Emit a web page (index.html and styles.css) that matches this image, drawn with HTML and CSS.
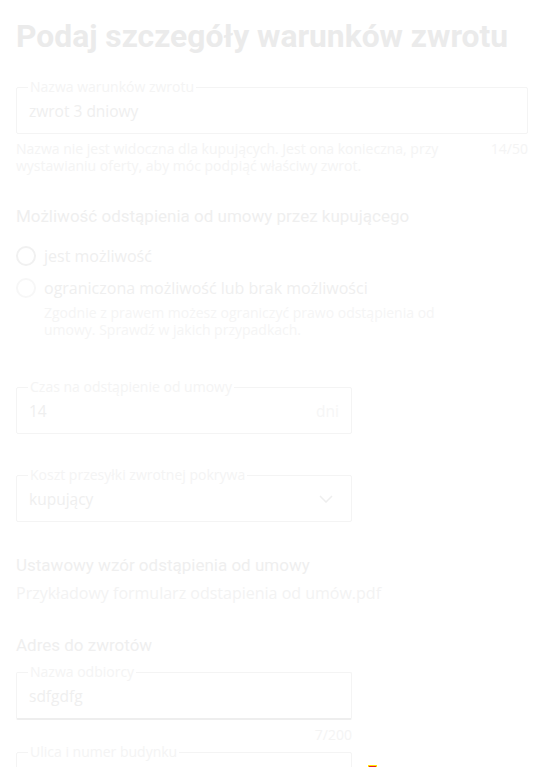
FILE: index.html
```html
<!DOCTYPE html>
<html lang="pl">
<head>
<meta charset="utf-8">
<link rel="stylesheet" href="styles.css">
</head>
<body>
<main class="page">
  <h1 class="title">Podaj szczegóły warunków zwrotu</h1>

  <fieldset class="field field-wide">
    <legend class="field-label">Nazwa warunków zwrotu</legend>
    <div class="field-value">zwrot 3 dniowy</div>
  </fieldset>
  <div class="helper-row">
    <p class="helper">Nazwa nie jest widoczna dla kupujących. Jest ona konieczna, przy wystawianiu oferty, aby móc podpiąć właściwy zwrot.</p>
    <span class="counter">14/50</span>
  </div>

  <h2 class="section-title">Możliwość odstąpienia od umowy przez kupującego</h2>
  <div class="radios">
    <label class="radio">
      <span class="radio-dot"></span>
      <span class="radio-text">jest możliwość</span>
    </label>
    <label class="radio">
      <span class="radio-dot radio-dot-faint"></span>
      <span class="radio-body">
        <span class="radio-text">ograniczona możliwość lub brak możliwości</span>
        <span class="radio-desc">Zgodnie z prawem możesz ograniczyć prawo odstąpienia od umowy. Sprawdź w jakich przypadkach.</span>
      </span>
    </label>
  </div>

  <fieldset class="field field-narrow field-time">
    <legend class="field-label">Czas na odstąpienie od umowy</legend>
    <div class="field-value field-split"><span>14</span><span class="suffix">dni</span></div>
  </fieldset>

  <fieldset class="field field-narrow field-cost">
    <legend class="field-label">Koszt przesyłki zwrotnej pokrywa</legend>
    <div class="field-value field-split"><span>kupujący</span>
      <svg class="chevron" width="14" height="8" viewBox="0 0 14 8"><path d="M1 1 L7 7 L13 1" fill="none" stroke="#eeeeee" stroke-width="1.5"/></svg>
    </div>
  </fieldset>

  <h2 class="section-title section-form">Ustawowy wzór odstąpienia od umowy</h2>
  <p class="link">Przykładowy formularz odstapienia od umów.pdf</p>

  <h2 class="section-title section-address">Adres do zwrotów</h2>

  <fieldset class="field field-narrow field-focused">
    <legend class="field-label">Nazwa odbiorcy</legend>
    <div class="field-value">sdfgdfg</div>
  </fieldset>
  <div class="counter-row"><span class="counter">7/200</span></div>

  <div class="last-row">
    <fieldset class="field field-narrow field-street">
      <legend class="field-label">Ulica i numer budynku</legend>
      <div class="field-value"></div>
    </fieldset>
    <span class="marker"></span>
  </div>
</main>
</body>
</html>
```
FILE: styles.css
```css
* { box-sizing: border-box; }
html, body { margin: 0; padding: 0; background: #ffffff; }
body { font-family: "Open Sans", "Noto Sans", sans-serif; color: #f0f0f0; overflow: hidden; height: 767px; }
.page { padding: 16px 16px 0 16px; width: 544px; }
.title { font-family: Roboto, sans-serif; font-weight: 700; font-size: 31.8px; line-height: 40px; margin: 0; color: #ebebeb; }
.field { border: 1px solid #f4f4f4; border-radius: 2px; margin: 22px 0 0 0; padding: 0 12px; min-width: 0; }
.field-wide { width: 512px; }
.field-narrow { width: 336px; }
.field-label { font-size: 14px; line-height: 18px; padding: 0 2px; margin-left: -1px; color: #f4f4f4; }
.field-value { height: 37px; display: flex; align-items: center; font-size: 15.5px; color: #efefef; padding-bottom: 8px; }
.field-split { justify-content: space-between; }
.suffix { color: #f6f6f6; }
.chevron { margin-right: 6px; }
.helper-row { display: flex; justify-content: space-between; gap: 24px; margin-top: 6px; }
.helper { margin: 0; font-size: 14px; line-height: 17px; color: #f4f4f4; max-width: 450px; }
.counter { font-size: 14px; line-height: 17px; color: #f4f4f4; }
.section-title { font-family: Roboto, sans-serif; font-weight: 400; font-size: 17px; line-height: 24px; margin: 30px 0 0 0; color: #efefef; }
.radios { margin-top: 18px; display: flex; flex-direction: column; gap: 12px; }
.radio { display: flex; gap: 8px; align-items: flex-start; }
.radio-dot { width: 20px; height: 20px; border: 2px solid #f1f1f1; border-radius: 50%; flex: none; }
.radio-dot-faint { border-color: #f7f7f7; }
.radio-body { display: flex; flex-direction: column; }
.radio-text { font-size: 16px; line-height: 20px; color: #efefef; }
.radio-desc { font-size: 14px; line-height: 17px; color: #f5f5f5; margin-top: 6px; max-width: 420px; }
.field-time { margin-top: 40px; }
.field-cost { margin-top: 32px; }
.section-form { margin-top: 31px; }
.link { margin: 4px 0 0 0; font-size: 16px; line-height: 24px; color: #f3f3f3; }
.section-address { margin-top: 28px; }
.field-focused { border-bottom: 2px solid #eeeeee; margin-top: 6px; }
.counter-row { width: 336px; display: flex; justify-content: flex-end; margin-top: 6px; }
.last-row { display: flex; align-items: flex-start; gap: 16px; }
.field-street { margin-top: 0; }
.marker { width: 9px; height: 3px; background: #e8202a; border: 1px solid #ffe600; border-bottom: none; margin-top: 22px; }
```
